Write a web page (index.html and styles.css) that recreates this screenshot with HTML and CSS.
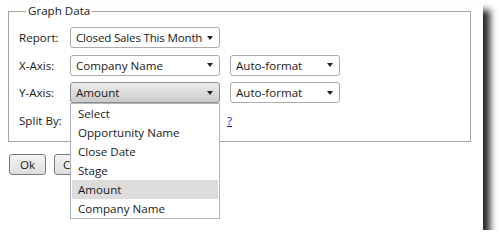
FILE: index.html
```html
<!DOCTYPE html>
<html>
<head>
<meta charset="utf-8">
<link rel="stylesheet" href="styles.css">
</head>
<body>
<div class="window">
  <fieldset class="graph">
    <legend>Graph Data</legend>
    <div class="rows">
      <div class="row">
        <span class="label">Report:</span>
        <div class="select"><span class="val tight">Closed Sales This Month</span><span class="arrow"></span></div>
      </div>
      <div class="row">
        <span class="label">X-Axis:</span>
        <div class="select"><span class="val">Company Name</span><span class="arrow"></span></div>
        <div class="select small"><span class="val">Auto-format</span><span class="arrow"></span></div>
      </div>
      <div class="row">
        <span class="label">Y-Axis:</span>
        <div class="select open"><span class="val">Amount</span><span class="arrow"></span>
          <ul class="list">
            <li>Select</li>
            <li>Opportunity Name</li>
            <li>Close Date</li>
            <li>Stage</li>
            <li class="hl">Amount</li>
            <li>Company Name</li>
          </ul>
        </div>
        <div class="select small"><span class="val">Auto-format</span><span class="arrow"></span></div>
      </div>
      <div class="row">
        <span class="label">Split By:</span>
        <div class="select"><span class="val"></span><span class="arrow"></span></div>
        <a class="help" href="#">?</a>
      </div>
    </div>
  </fieldset>
  <div class="buttons">
    <button class="btn ok">Ok</button>
    <button class="btn cancel">Cancel</button>
  </div>
</div>
</body>
</html>
```
FILE: styles.css
```css
html, body {
  margin: 0;
  padding: 0;
  background: #fff;
}
body {
  font-family: "Open Sans", "Noto Sans", sans-serif;
  font-size: 11.6px;
  color: #1a1a1a;
}
.window {
  width: 483px;
  height: 227px;
  background: #fff;
  box-shadow: 7px 7px 7px rgba(0, 0, 0, 0.85);
  overflow: visible;
}
.graph {
  box-sizing: border-box;
  width: 463px;
  margin: 3px 0 0 8px;
  padding: 8px 10px 10px 10px;
  border: 1px solid #a5a5a5;
  min-width: 0;
}
.graph legend {
  padding: 0 2px;
  margin-left: 7px;
  line-height: 16px;
  color: #1a1a1a;
}
.rows {
  display: flex;
  flex-direction: column;
  gap: 6.5px;
}
.row {
  display: flex;
  align-items: center;
  height: 21px;
}
.label {
  width: 51px;
  flex: none;
}
.select {
  box-sizing: border-box;
  position: relative;
  width: 150px;
  height: 21px;
  border: 1px solid #ababab;
  border-radius: 3px;
  background: #fff;
  display: flex;
  align-items: center;
  padding: 0 6px 0 5px;
  margin-right: 10px;
}
.select.small {
  width: 110px;
}
.select .val {
  flex: 1;
  white-space: nowrap;
  overflow: hidden;
  line-height: 19px;
}
.select .val.tight {
  letter-spacing: -0.2px;
}
.arrow {
  flex: none;
  width: 0;
  height: 0;
  border-left: 3.5px solid transparent;
  border-right: 3.5px solid transparent;
  border-top: 4px solid #222;
  margin-left: 2px;
}
.select.open {
  border-color: #8e8e8e;
  background: linear-gradient(#ededed, #cacaca);
}
.list {
  position: absolute;
  left: -1px;
  top: 20px;
  width: 150px;
  box-sizing: border-box;
  margin: 0;
  padding: 0 1px 0 1px;
  list-style: none;
  background: #fff;
  border: 1px solid #b4b4c0;
  z-index: 5;
}
.list li {
  height: 19px;
  line-height: 19px;
  padding-left: 6px;
  white-space: nowrap;
}
.list li.hl {
  background: #dcdcdc;
}
.help {
  color: #1010e8;
  text-decoration: underline;
  margin-left: -3px;
}
.buttons {
  display: flex;
  gap: 8px;
  margin: 12px 0 0 9px;
}
.btn {
  box-sizing: border-box;
  height: 21px;
  border: 1px solid #7a7a7a;
  border-radius: 3px;
  background: linear-gradient(#f4f4f4, #dedede);
  font-family: inherit;
  font-size: 11.6px;
  color: #1a1a1a;
  padding: 0;
}
.btn.ok {
  width: 37px;
}
.btn.cancel {
  width: 54px;
}
```
